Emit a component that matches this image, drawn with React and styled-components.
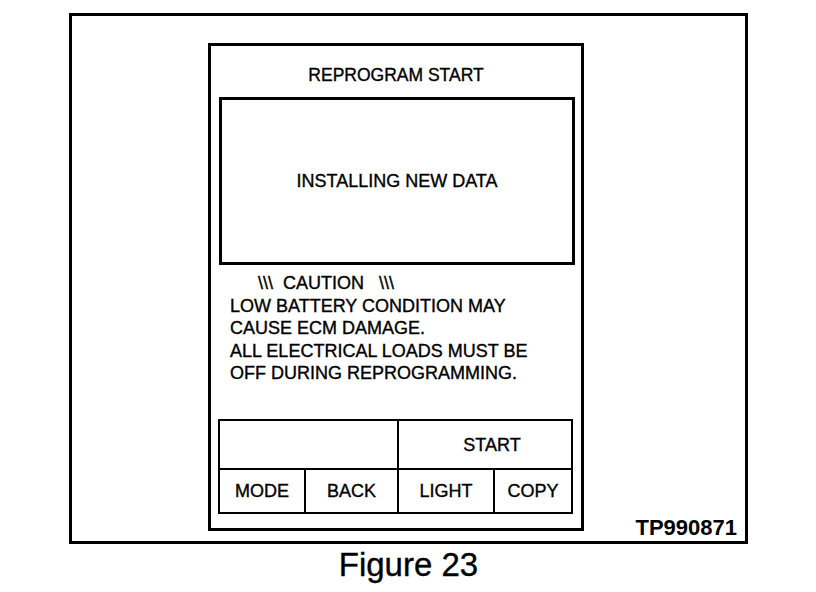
import React from 'react';
import styled, {createGlobalStyle} from 'styled-components';

const GlobalStyle = createGlobalStyle`
  html, body {
    margin: 0;
    padding: 0;
    background: #fff;
  }
  body {
    font-family: "Liberation Sans", Arial, Helvetica, sans-serif;
    color: #000;
    -webkit-text-stroke: 0.35px #000;
  }
`;

const buttons = ['MODE', 'BACK', 'LIGHT', 'COPY'];

const cautionLines = [
  'LOW BATTERY CONDITION MAY',
  'CAUSE ECM DAMAGE.',
  'ALL ELECTRICAL LOADS MUST BE',
  'OFF DURING REPROGRAMMING.',
];

const App = () => {
  return (
    <React.Fragment>
      <GlobalStyle />
      <Page>
        <Figure>
          <Frame>
            <Panel>
              <Title>REPROGRAM START</Title>
              <Screen>INSTALLING NEW DATA</Screen>
              <Caution>
                <CautionHead>
                  {'\\\\\\\u00a0\u00a0CAUTION\u00a0\u00a0\u00a0\\\\\\'}
                </CautionHead>
                {cautionLines.map((line) => (
                  <CautionLine key={line}>{line}</CautionLine>
                ))}
              </Caution>
              <ButtonGrid>
                <Key span={2} />
                <Key span={2} shift={14}>START</Key>
                {buttons.map((b) => (
                  <Key key={b}>{b}</Key>
                ))}
              </ButtonGrid>
            </Panel>
            <Label>TP990871</Label>
          </Frame>
          <Caption>Figure 23</Caption>
        </Figure>
      </Page>
    </React.Fragment>
  );
};
export default App;

const Page = styled.div`
  width: 816px;
  height: 592px;
  box-sizing: border-box;
  padding: 13px 0 0 69px;
  overflow: hidden;
`;

const Figure = styled.div`
  width: 679px;
  display: flex;
  flex-direction: column;
`;

const Frame = styled.div`
  box-sizing: border-box;
  width: 679px;
  height: 531px;
  border: 3px solid #000;
  display: flex;
  align-items: flex-end;
`;

const Panel = styled.div`
  box-sizing: border-box;
  width: 376px;
  height: 488px;
  margin: 0 0 10px 136px;
  border: 3px solid #000;
  display: flex;
  flex-direction: column;
`;

const Title = styled.div`
  margin-top: 18px;
  font-size: 17.5px;
  line-height: 22px;
  text-align: center;
`;

const Screen = styled.div`
  box-sizing: border-box;
  height: 168px;
  margin: 11px 6px 0 8px;
  border: 3px solid #000;
  display: flex;
  align-items: center;
  justify-content: center;
  font-size: 18px;
  line-height: 22px;
`;

const Caution = styled.div`
  margin-top: 7px;
  padding-left: 19px;
  font-size: 18px;
  line-height: 22.5px;
`;

const CautionHead = styled.div`
  padding-left: 28px;
`;

const CautionLine = styled.div`
  white-space: nowrap;
`;

const ButtonGrid = styled.div`
  margin: auto 8px 14px 7px;
  display: grid;
  grid-template-columns: 84px 91px 94px 76px;
  grid-template-rows: 47px 42px;
  gap: 2px;
  border: 2px solid #000;
  background: #000;
`;

const Key = styled.div`
  grid-column: span ${(p) => p.span || 1};
  background: #fff;
  display: flex;
  align-items: center;
  justify-content: center;
  padding-left: ${(p) => p.shift || 0}px;
  font-size: 18px;
  line-height: 22px;
`;

const Label = styled.div`
  margin: 0 8px 2px auto;
  font-size: 22px;
  line-height: 22px;
  font-weight: bold;
  -webkit-text-stroke: 0;
`;

const Caption = styled.div`
  margin-top: 4px;
  font-size: 33px;
  line-height: 33px;
  text-align: center;
`;
